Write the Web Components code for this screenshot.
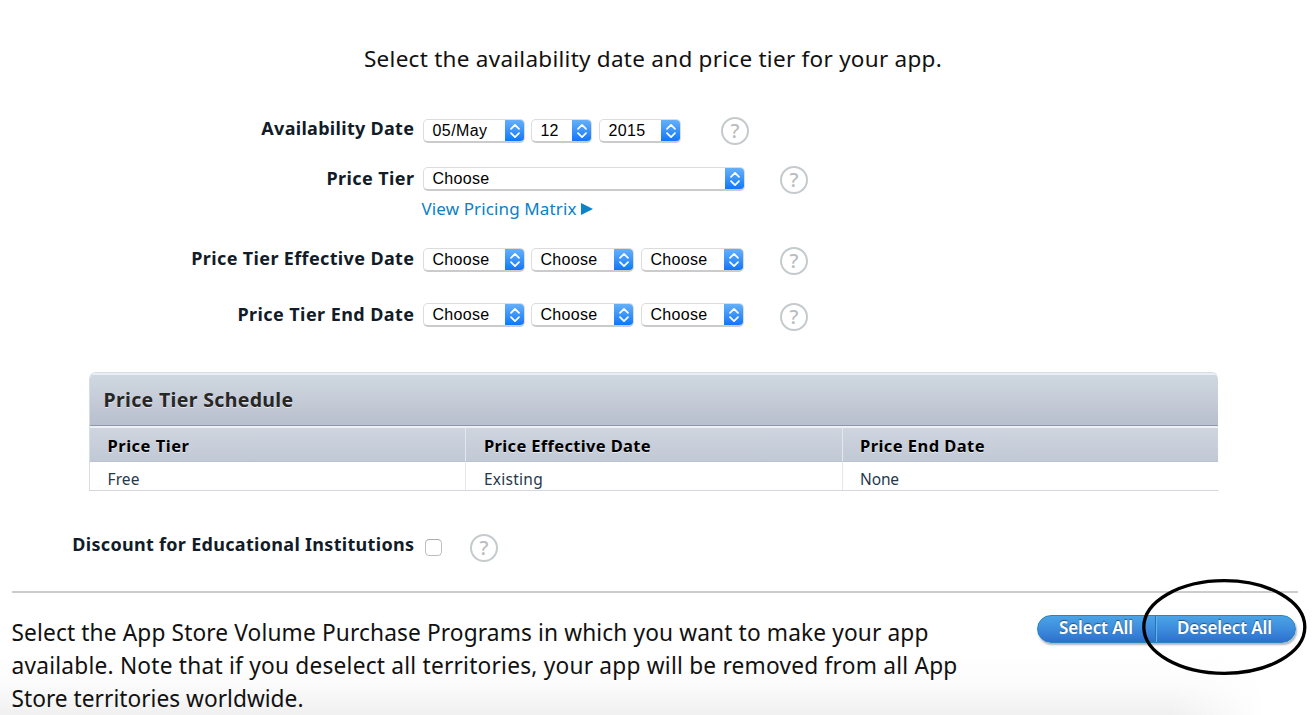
<!DOCTYPE html>
<html lang="en"><head><meta charset="utf-8"><title>Rights and Pricing</title>
<style>
html,body{margin:0;height:715px;overflow:hidden;background:#fff}
body{font-family:"Noto Sans","Open Sans",sans-serif;color:#111c28}
</style></head><body>
<pricing-page></pricing-page>
<script>
const define=(name,html,init)=>customElements.define(name,class extends HTMLElement{
  connectedCallback(){
    if(this.shadowRoot)return;
    this.attachShadow({mode:'open'}).innerHTML=html;
    if(init)init(this,this.shadowRoot);
  }
});

// A single line of text tracked to a given measure.
define('tracked-text',`<style>:host{display:block;white-space:nowrap}span{display:inline-block}</style><span><slot></slot></span>`,(h,r)=>{
  const s=r.querySelector('span'),w=+h.getAttribute('w');
  const n=h.textContent.length;
  s.style.letterSpacing='0px';
  const d=(w-s.getBoundingClientRect().width)/n;
  s.style.letterSpacing=d+'px';
  s.style.marginRight=-d+'px';
});

define('mac-select',`<style>
:host{display:flex;box-sizing:border-box;height:24px;border-radius:5px;overflow:hidden;background:#fff;border:1px solid #dcdcdc;border-bottom:2px solid #cbcbcb;flex:none;font:16px/22px "Liberation Sans",Arial,sans-serif;color:#000}
.t{flex:1;padding-left:8.5px}
svg{display:block;flex:none;margin:-1px -1px -2px 0}
</style><div class="t"></div>
<svg width="20" height="24"><defs><linearGradient id="g" x2="0" y2="1"><stop stop-color="#69b2fa"/><stop offset=".5" stop-color="#3a93fa"/><stop offset="1" stop-color="#0a70fb"/></linearGradient></defs><path d="M0 0H15Q20 0 20 5V19Q20 24 15 24H0Z" fill="url(#g)"/><path d="M6 9.8L10 5.8L14 9.8M6 14.2L10 18.2L14 14.2" fill="none" stroke="#fff" stroke-width="1.7" stroke-linecap="round" stroke-linejoin="round"/></svg>`,(h,r)=>{
  h.style.width=h.getAttribute('width')+'px';
  const label=document.createElement('tracked-text');
  label.setAttribute('w',h.getAttribute('tw'));
  label.textContent=h.textContent;
  r.querySelector('.t').append(label);
});

define('help-icon',`<style>:host{display:block;flex:none;width:28px;height:28px}.c{box-sizing:border-box;width:28px;height:28px;border:2.5px solid #c5cacd;border-radius:50%;text-align:center;font:500 20px/24px "Noto Sans",sans-serif;color:#b9bdc0}</style><div class="c">?</div>`);

define('form-row',`<style>
:host{display:grid;grid-template-columns:414px 1fr;column-gap:9px;height:24px;align-items:start}
.l{justify-self:end;margin-top:var(--label-shift,-2px);font-size:18px;font-weight:700;line-height:24px}
.c{display:flex;gap:6px}
::slotted(mac-select:nth-of-type(3)){margin-left:1px}
::slotted(help-icon){margin-top:var(--help-shift,-1px);margin-left:var(--help-gap,31px)}
</style><div class="l"><slot name="label"></slot></div><div class="c"><slot></slot></div>`);

define('price-schedule',`<style>
:host{display:block;box-sizing:border-box;width:1130px;height:119px;border:1px solid #d8dce3;border-right-color:transparent;border-radius:7px 7px 0 0;overflow:hidden;border-bottom:1px solid #d4d7df}
.h{box-sizing:border-box;height:53px;border-top:2px solid #e9eef2;border-bottom:1px solid #8f98a9;background:linear-gradient(#cfd8e1,#c4cad6 55%,#b8c0cd);padding:9px 0 0 13.5px;font-weight:700;font-size:19.5px;line-height:31px;color:#272727;text-shadow:0 1px #e3e7ed}
.g{display:grid;grid-template-columns:375px 377px 1fr}
.g div{box-sizing:border-box;border-left:1px solid #e4e7ec;padding-left:18px}
.g div:nth-child(3n+1){border-left:0;padding-left:17.5px}
.g div:nth-child(3n){padding-left:17px}
.g .th{height:36px;border-top:2px solid #edf0f4;background:linear-gradient(#ced5df,#c1c9d5);border-bottom:1px solid #b9c2ce;font-weight:700;font-size:16.5px;line-height:35px;color:#000;text-shadow:0 1px #e3e7ed}
.g .td{height:28px;font-size:15.5px;line-height:34px;color:#26394b}
</style>
<div class="h"><tracked-text w="190">Price Tier Schedule</tracked-text></div>
<div class="g"><div class="th"><tracked-text w="82">Price Tier</tracked-text></div><div class="th"><tracked-text w="167">Price Effective Date</tracked-text></div><div class="th"><tracked-text w="125">Price End Date</tracked-text></div>
<div class="td"><tracked-text w="32">Free</tracked-text></div><div class="td"><tracked-text w="59">Existing</tracked-text></div><div class="td"><tracked-text w="39">None</tracked-text></div></div>`);

define('mac-checkbox',`<style>:host{display:block;box-sizing:border-box;width:17px;height:17px;margin:2px 23px 0 2px;border:1px solid #bdbdbd;border-top-color:#aaa;border-radius:4.5px;background:#fff}</style>`);

define('pill-group',`<style>
:host{display:flex;box-sizing:border-box;width:259px;height:28px;border:1px solid #2784bd;border-radius:14px;overflow:hidden;background:linear-gradient(#4ba4e6,#3d8cdd 50%,#2d70cd);box-shadow:1px 2px 2px #aeb4bd;color:#fff;font-weight:600;font-size:17px;line-height:23px;text-shadow:0 -1px 1px #285580}
div{box-sizing:border-box;padding-left:21px;width:117px}div+div{border-left:1px solid #2377ad;box-shadow:inset 1px 0 #65b3e8;flex:1}
</style><div><tracked-text w="74">Select All</tracked-text></div><div><tracked-text w="95">Deselect All</tracked-text></div>`);

define('hand-ellipse',`<style>:host{display:block;position:absolute;left:1140px;top:576px;width:170px;height:102px}svg{display:block}</style><svg width="170" height="102"><ellipse cx="84.3" cy="51" rx="80.5" ry="46.3" fill="none" stroke="#000" stroke-width="3.3"/></svg>`);

define('pricing-page',`<style>
:host{display:block;position:relative;box-sizing:border-box;width:1312px;height:715px;overflow:hidden;padding-top:43px;background:linear-gradient(90deg,#fff0 1170px,#fff 1265px),linear-gradient(#fff 655px,#fbfbfb 685px,#f0f0f0 715px)}
.title{margin-left:364px;font-size:22.5px;line-height:32px;height:32px;color:#111}
.link{display:flex;align-items:center;gap:5px;margin:7px 0 0 421.5px;height:22px;font-size:17px;line-height:22px;color:#0b80c3}
.link svg{display:block}
hr{margin:30px 14px 0 12px;border:0;height:2px;background:#ccc}
.foot{display:flex;align-items:flex-start}
.copy{width:1025px;padding:23px 0 0 11.5px;box-sizing:border-box;font-size:22.7px;line-height:33px;color:#111}
pill-group{margin:22px 0 0 12px}
</style>
<div class="title"><tracked-text w="578">Select the availability date and price tier for your app.</tracked-text></div>
<form-row style="margin-top:44px;--help-gap:34px;--label-shift:-3px;--help-shift:-2px"><tracked-text slot="label" w="153">Availability Date</tracked-text><mac-select width="102" tw="55">05/May</mac-select><mac-select width="61" tw="18">12</mac-select><mac-select width="82" tw="37">2015</mac-select><help-icon></help-icon></form-row>
<form-row style="margin-top:24px;--label-shift:-1px"><tracked-text slot="label" w="88">Price Tier</tracked-text><mac-select width="322" tw="57">Choose</mac-select><help-icon style="margin-left:29px"></help-icon></form-row>
<div class="link"><tracked-text w="155">View Pricing Matrix</tracked-text><svg width="12" height="14"><path d="M0 1V13L12 7Z" fill="#0b83c9"/></svg></div>
<form-row style="margin-top:28px"><tracked-text slot="label" w="223">Price Tier Effective Date</tracked-text><mac-select width="102" tw="57">Choose</mac-select><mac-select width="103" tw="57">Choose</mac-select><mac-select width="103" tw="57">Choose</mac-select><help-icon style="margin-left:30px"></help-icon></form-row>
<form-row style="margin-top:31px;--label-shift:-1px;--help-shift:0px"><tracked-text slot="label" w="177">Price Tier End Date</tracked-text><mac-select width="102" tw="57">Choose</mac-select><mac-select width="103" tw="57">Choose</mac-select><mac-select width="103" tw="57">Choose</mac-select><help-icon style="margin-left:30px"></help-icon></form-row>
<price-schedule style="margin:45px 0 0 89px"></price-schedule>
<form-row style="margin-top:46px;--help-shift:-3px;--help-gap:0px;--label-shift:-5px"><tracked-text slot="label" w="342">Discount for Educational Institutions</tracked-text><mac-checkbox></mac-checkbox><help-icon style="margin-left:-1px"></help-icon></form-row>
<hr>
<div class="foot"><div class="copy"><tracked-text w="917">Select the App Store Volume Purchase Programs in which you want to make your app</tracked-text><tracked-text w="946">available. Note that if you deselect all territories, your app will be removed from all App</tracked-text><tracked-text w="292">Store territories worldwide.</tracked-text></div><pill-group></pill-group></div>
<hand-ellipse></hand-ellipse>`);
</script></body></html>
